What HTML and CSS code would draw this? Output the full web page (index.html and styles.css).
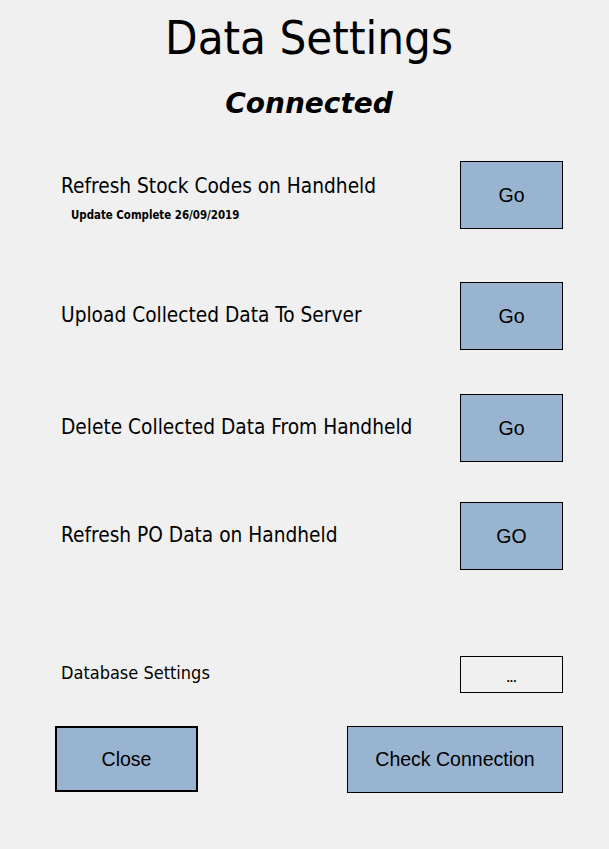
FILE: index.html
```html
<!DOCTYPE html>
<html lang="en">
<head>
<meta charset="utf-8">
<title>Data Settings</title>
<link rel="stylesheet" href="styles.css">
</head>
<body>
<div class="window">
  <h1 class="title">Data Settings</h1>
  <div class="status">Connected</div>

  <div class="row row-stock">
    <div class="label-group">
      <div class="label">Refresh Stock Codes on Handheld</div>
      <div class="sub">Update Complete 26/09/2019</div>
    </div>
    <button class="btn go">Go</button>
  </div>

  <div class="row row-upload">
    <div class="label">Upload Collected Data To Server</div>
    <button class="btn go">Go</button>
  </div>

  <div class="row row-delete">
    <div class="label">Delete Collected Data From Handheld</div>
    <button class="btn go">Go</button>
  </div>

  <div class="row row-po">
    <div class="label">Refresh PO Data on Handheld</div>
    <button class="btn go">GO</button>
  </div>

  <div class="row row-db">
    <div class="label label-small">Database Settings</div>
    <button class="btn dots">...</button>
  </div>

  <div class="footer">
    <button class="btn close">Close</button>
    <button class="btn check">Check Connection</button>
  </div>
</div>
</body>
</html>
```

FILE: styles.css
```css
html, body {
  margin: 0;
  padding: 0;
  background: #f0f0f0;
}

.window {
  width: 609px;
  height: 849px;
  box-sizing: border-box;
  padding: 10px 46px 0 55px;
  font-family: "DejaVu Sans Condensed", "DejaVu Sans", sans-serif;
  font-stretch: condensed;
  color: #000;
}

.title {
  margin: 0;
  font-size: 47px;
  line-height: 56px;
  font-weight: normal;
  text-align: center;
}

.status {
  margin-top: 22px;
  font-family: "DejaVu Sans", sans-serif;
  font-stretch: normal;
  font-weight: bold;
  font-style: italic;
  font-size: 28px;
  line-height: 32px;
  text-align: center;
}

.row {
  display: flex;
  justify-content: space-between;
  align-items: center;
  padding-left: 6px;
}

.row-stock {
  margin-top: 41px;
  align-items: flex-start;
}
.row-upload { margin-top: 53px; }
.row-delete { margin-top: 44px; }
.row-po { margin-top: 40px; }
.row-db { margin-top: 86px; }

.label-group {
  padding-top: 13px;
}

.label {
  font-size: 20.7px;
  line-height: 24px;
  white-space: nowrap;
}

.row-upload .label,
.row-delete .label,
.row-po .label {
  margin-bottom: 2px;
}

.label-small {
  font-size: 18px;
  margin-bottom: 3px;
}

.sub {
  margin-top: 10px;
  margin-left: 10px;
  font-size: 11.4px;
  line-height: 14px;
  font-weight: bold;
}

.btn {
  box-sizing: border-box;
  margin: 0;
  padding: 0;
  background: #99b4d1;
  border: 1px solid #000;
  color: #000;
  font-family: "Liberation Sans", Arial, sans-serif;
  font-size: 19.5px;
  cursor: pointer;
}

.go {
  width: 103px;
  height: 68px;
}

.dots {
  width: 103px;
  height: 37px;
  background: #f0f0f0;
  font-size: 12px;
  font-weight: bold;
  padding-top: 6px;
}

.footer {
  display: flex;
  justify-content: space-between;
  margin-top: 33px;
}

.close {
  width: 143px;
  height: 66px;
  border: 2px solid #000;
}

.check {
  width: 216px;
  height: 67px;
}
```
